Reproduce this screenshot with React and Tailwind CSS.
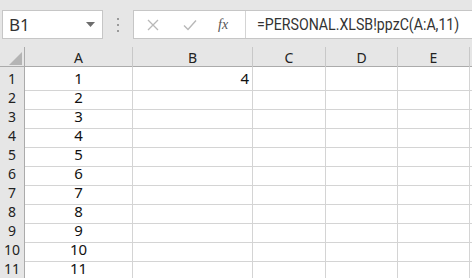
/**
 * Spreadsheet view — name box, formula bar and a small cell grid.
 */

const COLUMNS = ['A', 'B', 'C', 'D', 'E']
const ROWS = Array.from({ length: 11 }, (_, i) => i + 1)
const FONT = { fontFamily: '"Noto Sans", "Liberation Sans", "Noto Sans CJK SC", sans-serif' }

function cellText(row, col) {
  if (col === 'A') return String(row)
  if (col === 'B' && row === 1) return '4'
  return ''
}

function FormulaBar() {
  return (
    <div className="h-[47px] bg-[#e6e6e6] flex items-start pt-[10px]">
      {/* Name box */}
      <div className="ml-[2px] w-[101px] shrink-0 h-[29px] bg-white border border-[#c6c6c6] flex items-center justify-between pl-[6px] pr-[6px]">
        <span className="text-[17px] text-[#333]">B1</span>
        <svg width="9" height="5" viewBox="0 0 9 5" className="mr-[1px]">
          <path d="M0 0 H9 L4.5 5 Z" fill="#6d6d6d" />
        </svg>
      </div>

      {/* Grip dots */}
      <div className="w-[30px] shrink-0 h-[29px] flex flex-col items-center justify-center gap-[4px]">
        <span className="w-[2px] h-[2px] bg-[#9a9a9a]" />
        <span className="w-[2px] h-[2px] bg-[#9a9a9a]" />
        <span className="w-[2px] h-[2px] bg-[#9a9a9a]" />
      </div>

      {/* Formula box */}
      <div className="flex-1 min-w-0 h-[29px] bg-white border border-[#c6c6c6] border-r-0 flex items-center overflow-hidden">
        <div className="w-[112px] shrink-0 h-full flex items-center border-r border-[#d4d4d4]">
          <svg width="12" height="12" viewBox="0 0 12 12" className="ml-[13px]">
            <path d="M1 1 L11 11 M11 1 L1 11" stroke="#b8b8b8" strokeWidth="1.3" fill="none" />
          </svg>
          <svg width="14" height="12" viewBox="0 0 14 12" className="ml-[24px]">
            <path d="M1 6.5 L5 10.5 L13 1.5" stroke="#b8b8b8" strokeWidth="1.4" fill="none" />
          </svg>
          <span
            className="ml-[21px] text-[14px] italic text-[#555]"
            style={{ fontFamily: '"Liberation Serif", serif' }}
          >
            fx
          </span>
        </div>
        <span
          className="ml-[11px] text-[16px] text-[#333] whitespace-nowrap origin-left scale-x-[0.885]"
          style={{ fontFamily: 'Roboto, sans-serif' }}
        >
          =PERSONAL.XLSB!ppzC(A:A,11)
        </span>
      </div>
    </div>
  )
}

function Grid() {
  const template = 'grid-cols-[25px_108px_120px_73px_72px_72px_1fr]'
  return (
    <div className="bg-white">
      {/* Column headers */}
      <div className={`grid ${template} h-[20px] bg-[#e6e6e6] border-b border-[#ababab]`}>
        <div className="relative border-r border-[#ababab]">
          <svg width="13" height="13" viewBox="0 0 13 13" className="absolute right-[2px] bottom-[3px]">
            <path d="M13 0 V13 H0 Z" fill="#b4b4b4" />
          </svg>
        </div>
        {COLUMNS.map((c) => (
          <div key={c} className="border-r border-[#c8c8c8] flex items-center justify-center text-[14px] text-[#222]">
            {c}
          </div>
        ))}
        <div />
      </div>

      {/* Rows */}
      {ROWS.map((r) => (
        <div key={r} className={`grid ${template} h-[19px]`}>
          <div className="bg-[#e6e6e6] border-r border-b border-r-[#ababab] border-b-[#c8c8c8] flex items-center justify-center text-[14px] text-[#222]">
            {r}
          </div>
          {COLUMNS.map((c) => (
            <div
              key={c}
              className={`border-r border-b border-[#d4d4d4] flex items-center text-[15px] text-[#111] ${
                c === 'A' ? 'justify-center' : 'justify-end pr-[3px]'
              }`}
            >
              {cellText(r, c)}
            </div>
          ))}
          <div className="border-b border-[#d4d4d4]" />
        </div>
      ))}
    </div>
  )
}

export default function App() {
  return (
    <div className="w-[472px] h-[278px] overflow-hidden bg-white" style={FONT}>
      <FormulaBar />
      <Grid />
    </div>
  )
}
